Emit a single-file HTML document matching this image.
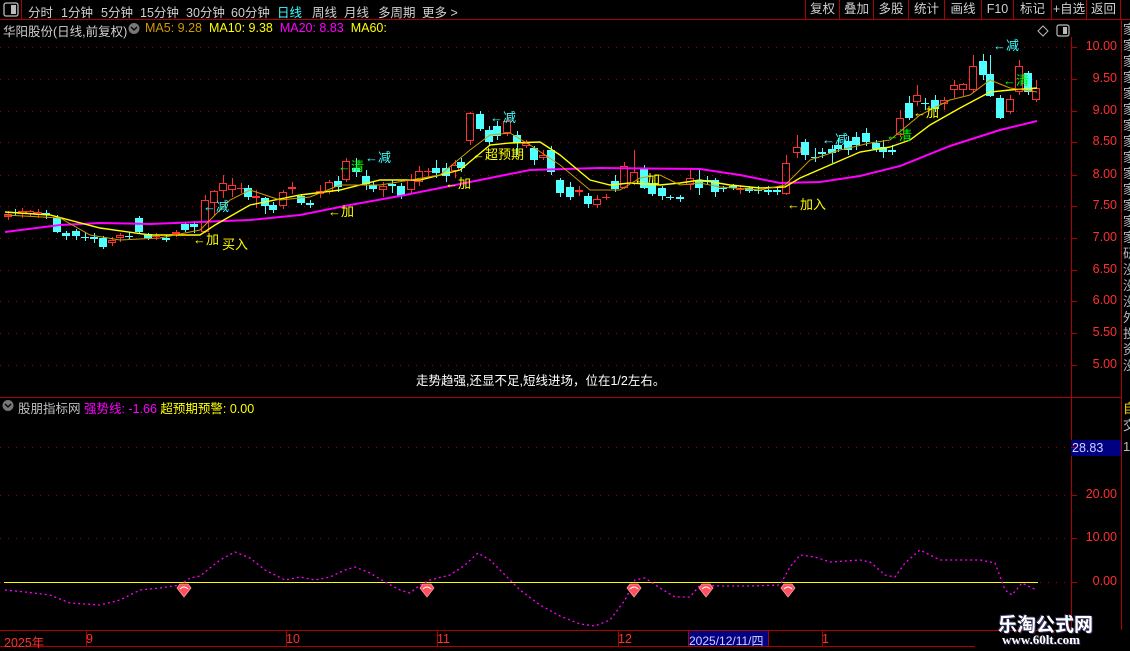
<!DOCTYPE html>
<html><head><meta charset="utf-8">
<style>
*{margin:0;padding:0;box-sizing:border-box}
body{width:1130px;height:650px;background:#000;overflow:hidden;position:relative;font-family:"Liberation Sans","Noto Sans CJK SC",sans-serif;font-size:12px;color:#c8c8c8}
.a{position:absolute;white-space:nowrap}
svg{position:absolute;left:0;top:0}
.tab{position:absolute;top:2px;font-size:12.5px;color:#d0d0d0}
.btn{position:absolute;top:0;height:20px;border-left:1px solid #b00000;font-size:12.5px;color:#d0d0d0;text-align:center;line-height:19px}
.ax{position:absolute;color:#ff3030;font-size:12.5px;right:13px;width:50px;text-align:right}
.lb{position:absolute;font-size:13px;white-space:nowrap;line-height:13px}
</style></head><body>
<svg width="1130" height="650" id="s">
<line x1="0" y1="19.5" x2="1130" y2="19.5" stroke="#b00000"/>
<line x1="21.5" y1="0" x2="21.5" y2="19" stroke="#b00000"/>
<line x1="1071.5" y1="37" x2="1071.5" y2="630" stroke="#b00000"/>
<line x1="1121.5" y1="20" x2="1121.5" y2="630" stroke="#b00000"/>
<line x1="0" y1="397.5" x2="1121" y2="397.5" stroke="#b00000"/>
<line x1="0" y1="630.5" x2="1071" y2="630.5" stroke="#b00000"/>
<line x1="0" y1="646.5" x2="975" y2="646.5" stroke="#b00000"/>
<rect x="4" y="3" width="14" height="13" rx="2" fill="none" stroke="#bbb" stroke-width="1.3"/>
<rect x="11" y="5" width="5" height="9" fill="#bbb"/>
<rect x="1057" y="25" width="12" height="11" rx="2" fill="none" stroke="#bbb" stroke-width="1.2"/>
<rect x="1063" y="27" width="4" height="7" fill="#bbb"/>
<path d="M1043 26 L1048 31 L1043 36 L1038 31Z" fill="none" stroke="#bbb"/>
<circle cx="134" cy="28.5" r="5.5" fill="#777"/><path d="M131 27l3 3 3-3" stroke="#000" fill="none" stroke-width="1.3"/>
<circle cx="8" cy="405.5" r="5.5" fill="#777"/><path d="M5 404l3 3 3-3" stroke="#000" fill="none" stroke-width="1.3"/>
<rect x="1071" y="440" width="50" height="16" fill="#000080"/>
<rect x="688" y="631" width="80" height="15" fill="#000080"/>
<g id="g"></g>
</svg>

<div class="tab" style="left:28px">分时</div>
<div class="tab" style="left:61px">1分钟</div>
<div class="tab" style="left:101px">5分钟</div>
<div class="tab" style="left:140px">15分钟</div>
<div class="tab" style="left:186px">30分钟</div>
<div class="tab" style="left:231px">60分钟</div>
<div class="tab" style="left:277px;color:#40ffff">日线</div>
<div class="tab" style="left:312px">周线</div>
<div class="tab" style="left:344px">月线</div>
<div class="tab" style="left:378px">多周期</div>
<div class="tab" style="left:422px">更多 &gt;</div>
<div class="btn" style="left:805px;width:34px">复权</div>
<div class="btn" style="left:839px;width:34px">叠加</div>
<div class="btn" style="left:873px;width:35px">多股</div>
<div class="btn" style="left:908px;width:36px">统计</div>
<div class="btn" style="left:944px;width:37px">画线</div>
<div class="btn" style="left:981px;width:32px">F10</div>
<div class="btn" style="left:1013px;width:38px">标记</div>
<div class="btn" style="left:1051px;width:35px">+自选</div>
<div class="btn" style="left:1086px;width:35px;border-right:1px solid #b00000">返回</div>

<div class="a" style="left:3px;top:21px;font-size:12.5px;color:#d0d0d0">华阳股份(日线,前复权)</div>
<div class="a" style="left:145px;top:21px;font-size:12.5px"><span style="color:#d09a00">MA5: 9.28</span>&nbsp; <span style="color:#ffff00">MA10: 9.38</span>&nbsp; <span style="color:#ff00ff">MA20: 8.83</span>&nbsp; <span style="color:#ffff00">MA60:</span></div>

<div class="ax" style="top:39px">10.00</div><div class="ax" style="top:71px">9.50</div><div class="ax" style="top:103px">9.00</div><div class="ax" style="top:134px">8.50</div><div class="ax" style="top:167px">8.00</div><div class="ax" style="top:198px">7.50</div><div class="ax" style="top:230px">7.00</div><div class="ax" style="top:262px">6.50</div><div class="ax" style="top:293px">6.00</div><div class="ax" style="top:325px">5.50</div><div class="ax" style="top:357px">5.00</div>
<div class="ax" style="top:487px">20.00</div><div class="ax" style="top:530px">10.00</div><div class="ax" style="top:574px">0.00</div>
<div class="a" style="left:1072px;top:441px;color:#d0d0ff;font-size:12.5px">28.83</div>
<div class="a" style="left:1123px;top:22px;color:#bbb;font-size:13px;line-height:16px;width:10px;white-space:normal">家家家家家家家家家家家家家家研没没没外投资没</div>
<div class="a" style="left:1123px;top:398px;color:#ffd700;font-size:13px">自</div>
<div class="a" style="left:1123px;top:415px;color:#bbb;font-size:13px;line-height:21px;width:10px;white-space:normal">交11111111</div>

<div class="a" style="left:416px;top:370px;color:#fff;font-size:12.5px">走势趋强,还显不足,短线进场，位在1/2左右。</div>

<div class="a" style="left:18px;top:398px;font-size:12.5px;color:#c0c0c0">股朋指标网 <span style="color:#ff00ff">强势线: -1.66</span> <span style="color:#ffff00">超预期预警: 0.00</span></div>

<div class="a" style="left:4px;top:632px;color:#ff3030;font-size:12.5px">2025年</div>
<div class="a" style="left:86px;top:632px;color:#ff3030;font-size:12.5px">9</div>
<div class="a" style="left:286px;top:632px;color:#ff3030;font-size:12.5px">10</div>
<div class="a" style="left:437px;top:632px;color:#ff3030;font-size:12.5px">11</div>
<div class="a" style="left:618px;top:632px;color:#ff3030;font-size:12.5px">12</div>
<div class="a" style="left:689px;top:632px;color:#d0d0ff;font-size:12px">2025/12/11/四</div>
<div class="a" style="left:822px;top:632px;color:#ff3030;font-size:12.5px">1</div>

<div class="a" style="left:998px;top:610px;color:#fff;font-weight:bold;font-size:19px;text-shadow:1px 1px 0 #336,-1px -1px 0 #335">乐淘公式网</div>
<div class="a" style="left:1002px;top:632px;color:#fff;font-weight:bold;font-size:13px;font-family:'Liberation Serif',serif;text-shadow:1px 1px 0 #336">www.60lt.com</div>

<div class="lb" style="left:193px;top:233px;color:#ffff00">←加</div>
<div class="lb" style="left:222px;top:238px;color:#ffff00">买入</div>
<div class="lb" style="left:203px;top:200px;color:#40ffff">←减</div>
<div class="lb" style="left:338px;top:160px;color:#00ff00">←清</div>
<div class="lb" style="left:365px;top:151px;color:#40ffff">←减</div>
<div class="lb" style="left:328px;top:205px;color:#ffff00">←加</div>
<div class="lb" style="left:445px;top:177px;color:#ffff00">←加</div>
<div class="lb" style="left:472px;top:148px;color:#ffff00">←超预期</div>
<div class="lb" style="left:490px;top:111px;color:#40ffff">←减</div>
<div class="lb" style="left:634px;top:173px;color:#ffff00">←加</div>
<div class="lb" style="left:787px;top:198px;color:#ffff00">←加入</div>
<div class="lb" style="left:822px;top:133px;color:#40ffff">←减</div>
<div class="lb" style="left:886px;top:129px;color:#00ff00">←清</div>
<div class="lb" style="left:913px;top:106px;color:#ffff00">←加</div>
<div class="lb" style="left:993px;top:39px;color:#40ffff">←减</div>
<div class="lb" style="left:1003px;top:74px;color:#00ff00">←清</div>

<script>
var g=document.getElementById('g'),h='';
function L(x1,y1,x2,y2,c,d){h+='<line x1="'+x1+'" y1="'+y1+'" x2="'+x2+'" y2="'+y2+'" stroke="'+c+'"'+(d?' stroke-dasharray="'+d+'"':'')+'/>';}
[47,79,111,142,175,206,238,270,301,333,365].forEach(function(y){L(0,y+.5,1071,y+.5,'#a00000','1 7');L(1071,y+.5,1077,y+.5,'#b00000');});
[447,495,538,582].forEach(function(y){L(0,y+.5,1071,y+.5,'#a00000','1 7');L(1071,y+.5,1077,y+.5,'#b00000');});
[86,286,437,618,688,768,822].forEach(function(x){L(x+.5,630,x+.5,646,'#b00000');});
var C=[[8,217,214,211,220],[15,212,213,209,216],[22,214,211,208,218],[30,214,211,210,216],[38,215,212,209,218],[46,213,215,210,219],[57,218,232,215,233],[66,233,236,231,240],[76,231,236,229,240],[85,237,238,232,241],[94,237,239,233,243],[103,238,247,236,249],[112,243,240,237,246],[120,238,235,233,242],[129,236,237,232,240],[139,218,232,216,234],[148,234,238,233,240],[156,237,236,233,240],[166,238,240,235,242],[176,234,232,230,237],[185,224,230,222,232],[194,224,227,221,233],[205,232,200,195,233],[214,203,191,190,215],[223,191,183,175,198],[232,190,185,178,197],[241,188,188,183,193],[248,188,197,185,200],[256,198,196,190,208],[265,198,206,197,214],[273,205,210,202,213],[283,206,192,190,209],[292,189,187,182,194],[301,196,203,194,205],[310,203,205,200,208],[320,194,191,185,198],[329,192,182,180,194],[338,181,187,176,192],[346,180,161,158,182],[356,168,172,158,177],[366,176,184,170,190],[373,185,189,181,192],[383,190,186,182,197],[392,184,186,180,193],[401,186,196,183,199],[411,190,180,174,193],[419,182,171,166,186],[428,172,171,168,178],[436,168,173,160,178],[446,168,176,163,182],[455,171,165,160,178],[461,162,168,158,172],[470,141,113,112,145],[480,114,129,111,131],[489,130,142,126,146],[497,126,136,121,140],[507,133,121,113,136],[517,135,143,131,155],[526,146,143,140,148],[534,148,160,146,165],[543,158,155,150,160],[551,150,172,146,175],[560,180,193,178,197],[570,187,197,182,200],[579,192,190,186,196],[588,196,204,193,208],[597,205,199,195,208],[606,197,197,194,200],[615,181,189,175,192],[624,188,166,162,189],[634,184,172,150,185],[644,168,188,165,189],[652,183,194,180,196],[662,188,196,186,200],[670,197,198,195,200],[680,197,199,195,202],[690,185,178,170,190],[699,180,188,170,195],[707,180,182,176,185],[715,180,192,178,197],[723,188,189,186,192],[733,186,188,184,190],[740,189,189,185,194],[749,188,191,186,193],[758,190,191,186,194],[768,190,192,186,195],[777,190,192,188,195],[786,194,163,155,195],[797,153,147,135,158],[805,142,155,139,160],[815,157,158,148,162],[822,152,154,148,158],[832,149,153,145,163],[838,145,149,138,152],[848,141,150,136,155],[856,137,145,132,150],[866,133,142,128,146],[876,143,149,140,152],[883,147,152,140,158],[892,150,152,145,155],[900,135,118,110,137],[909,103,118,96,120],[917,102,95,85,106],[925,103,104,98,110],[935,100,109,95,112],[944,104,100,97,110],[954,90,85,80,98],[963,90,84,83,96],[973,90,66,55,93],[983,61,75,54,80],[990,74,96,55,97],[1000,98,118,95,119],[1010,112,99,95,114],[1019,92,66,60,95],[1028,73,92,71,95],[1036,100,88,80,102]];
C.forEach(function(c){var x=c[0],o=c[1],cl=c[2],hi=c[3],lo=c[4];var up=cl<=o;var col=up?'#ff3030':'#50ffff';var t=Math.min(o,cl),b=Math.max(o,cl);if(b-t<1.5){L(x-4,t+.5,x+4,t+.5,up?'#ff3030':'#50ffff');}
L(x+.5,hi,x+.5,t,col);L(x+.5,b,x+.5,lo,col);
if(b-t>=1.5){if(up)h+='<rect x="'+(x-3.5)+'" y="'+(t+.5)+'" width="7" height="'+(b-t-1)+'" fill="none" stroke="#ff3030"/>';else h+='<rect x="'+(x-4)+'" y="'+t+'" width="8" height="'+(b-t)+'" fill="#50ffff"/>';}});
function P(a,c,w,d){h+='<polyline fill="none" stroke="'+c+'" stroke-width="'+w+'"'+(d?' stroke-dasharray="'+d+'"':'')+' points="'+a.join(' ')+'"/>';}
P(['5,232','60,225','100,223','150,224','200,222','250,220','300,215','350,205','400,196','450,186','500,176','530,170','600,168','700,169','740,175','780,183','820,182','860,176','900,166','950,146','1000,130','1037,121'],'#ff00ff',2);
P(['5,212','50,215','100,228','150,235','200,235','215,225','250,205','300,195','340,190','380,180','420,180','460,170','490,145','510,143','540,142','560,155','590,180','610,185','630,183','660,185','680,183','700,180','730,185','760,188','785,187','800,178','830,165','860,152','890,147','910,140','930,125','960,108','990,92','1010,90','1037,88'],'#ffff00',1.4);
P(['5,215','60,218','90,235','120,240','160,238','200,230','230,200','250,190','280,200','310,197','340,185','380,185','410,180','440,175','470,150','490,135','510,133','530,145','560,165','590,190','620,190','640,178','660,175','680,185','700,183','720,187','760,190','785,185','810,160','840,150','870,143','890,140','920,115','950,100','970,95','990,80','1010,88','1037,92'],'#d09a00',1);
L(4,582.5,1038,582.5,'#ffff00');
P(['5,590','25,592','50,595','70,603','100,605','120,600','140,590','160,588','180,585','190,578','200,576','220,560','235,552','250,558','265,570','285,580','300,577','315,580','330,577','345,570','355,567','370,573','385,582','400,590','410,593','420,585','430,580','450,575','465,565','478,553','490,560','505,575','520,590','540,605','560,616','580,624','595,626','610,620','625,600','635,580','645,578','660,588','675,597','690,597','700,585','720,586','750,586','780,585','790,567','800,555','815,557','830,562','860,560','870,562','885,575','895,577','905,563','920,550','940,560','960,560','980,560','995,563','1005,590','1012,595','1022,583','1030,587','1037,590'],'#ff00ff',1.3,'2 3');
[184,427,634,706,788].forEach(function(x){h+='<path d="M'+(x-7)+' 588 L'+(x-4)+' 584 L'+(x+4)+' 584 L'+(x+7)+' 588 L'+x+' 597Z" fill="#ff5060" stroke="#ffa0a0" stroke-width=".8"/><path d="M'+(x-4)+' 589 Q'+x+' 585 '+(x+4)+' 589" fill="none" stroke="#fff" stroke-width="1"/>';});
g.innerHTML=h;
</script>
</body></html>
